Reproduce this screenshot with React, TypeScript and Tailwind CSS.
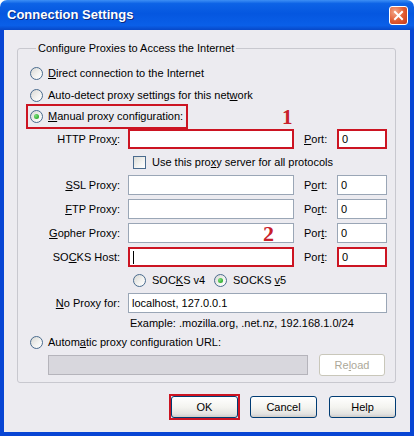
import React from 'react';

const Radio = ({ checked }: { checked?: boolean }) => (
  <span className="w-[13px] h-[13px] rounded-full border border-[#4a6b8e] bg-[linear-gradient(135deg,#d8d8d4_0%,#f4f4f2_60%,#ffffff_100%)] flex items-center justify-center shrink-0">
    {checked && <span className="w-[5px] h-[5px] rounded-full bg-[radial-gradient(circle_at_35%_35%,#7be07b,#169916)]" />}
  </span>
);

const Checkbox = () => (
  <span className="w-[13px] h-[13px] border border-[#4a6b8e] bg-[linear-gradient(135deg,#dcdcd7_0%,#f4f4f2_60%,#ffffff_100%)] shrink-0" />
);

const Field = ({ w, red, value, caret }: { w: string; red?: boolean; value?: string; caret?: boolean }) => (
  <div
    className={`${w} h-[20px] bg-white flex items-center px-[3px] text-[11px] ${
      red ? 'border-2 border-[#cc1422]' : 'border border-[#9aa6b6]'
    }`}
  >
    {caret && <span className="w-px h-[13px] bg-black" />}
    {value}
  </div>
);

const ProxyRow = ({
  label,
  port,
  red,
  redPort,
  caret,
}: {
  label: React.ReactNode;
  port: React.ReactNode;
  red?: boolean;
  redPort?: boolean;
  caret?: boolean;
}) => (
  <div className="flex items-center h-[24px]">
    <span className="w-[90px] text-right">{label}</span>
    <span className="w-[8px]" />
    <Field w="w-[166px]" red={red} caret={caret} />
    <span className="w-[43px] pl-[10px]">{port}</span>
    <Field w="w-[50px]" red={redPort} value="0" />
  </div>
);

const XpButton = ({ children, focus }: { children: React.ReactNode; focus?: boolean }) => (
  <button className="relative w-[67px] h-[22px] rounded-[3px] border border-[#003c74] bg-[linear-gradient(to_bottom,#ffffff_0%,#f4f4f0_50%,#e3e3e0_85%,#c9c9d2_100%)] text-[11px] text-black shadow-[inset_0_-1px_0_#d6d0c5]">
    {children}
    {focus && <span className="absolute -inset-[3px] border-2 border-[#cc1422]" />}
  </button>
);

export default function App() {
  return (
    <div className="w-[414px] h-[436px] flex flex-col font-['Liberation_Sans',Arial,sans-serif] text-[11px] text-black bg-white">
      <div className="h-[30px] shrink-0 rounded-t-[7px] bg-[linear-gradient(to_bottom,#3d8ff5_0%,#0d63e6_12%,#0557e0_45%,#0a5fe8_85%,#0748c8_100%)] flex items-center justify-between pl-[7px] pr-[6px]">
        <span className="text-white font-bold text-[13px] [text-shadow:1px_1px_0_#0a2a80]">Connection Settings</span>
        <span className="w-[19px] h-[19px] rounded-[3px] border border-white bg-[radial-gradient(circle_at_30%_30%,#f4a88a,#e0592f_55%,#c23a1c)] flex items-center justify-center">
          <svg width="11" height="11" viewBox="0 0 11 11">
            <path d="M2 2 L9 9 M9 2 L2 9" stroke="white" strokeWidth="2" strokeLinecap="square" />
          </svg>
        </span>
      </div>
      <div className="flex-1 flex flex-col bg-[#ecebf0] border-x-4 border-b-4 border-[#0845d4]">
        <fieldset className="relative ml-[13px] mr-[14px] mt-[11px] border border-[#c8c8cf] rounded-[3px] pl-[12px] pr-[8px] pb-[5px]">
          <legend className="ml-[6px] px-[2px] leading-[14px]">Configure Proxies to Access the Internet</legend>
          <div className="flex flex-col pt-[7px]">
            <div className="flex items-center h-[22px] gap-[5px]">
              <Radio />
              <span>
                <u>D</u>irect connection to the Internet
              </span>
            </div>
            <div className="flex items-center h-[22px] gap-[5px]">
              <Radio />
              <span>
                Auto-detect proxy settings for this net<u>w</u>ork
              </span>
            </div>
            <div className="flex items-center h-[21px]">
              <span className="flex items-center gap-[5px] outline-2 outline-solid outline-[#cc1422] outline-offset-[2px] pr-[1px]">
                <Radio checked />
                <span>
                  <u>M</u>anual proxy configuration:
                </span>
              </span>
            </div>
            <ProxyRow
              label={
                <>
                  HTTP Prox<u>y</u>:
                </>
              }
              port={
                <>
                  <u>P</u>ort:
                </>
              }
              red
              redPort
            />
            <div className="flex items-center h-[22px] pl-[103px] gap-[6px]">
              <Checkbox />
              <span>
                Use this pro<u>x</u>y server for all protocols
              </span>
            </div>
            <ProxyRow
              label={
                <>
                  <u>S</u>SL Proxy:
                </>
              }
              port={
                <>
                  P<u>o</u>rt:
                </>
              }
            />
            <ProxyRow
              label={
                <>
                  <u>F</u>TP Proxy:
                </>
              }
              port={
                <>
                  Po<u>r</u>t:
                </>
              }
            />
            <ProxyRow
              label={
                <>
                  <u>G</u>opher Proxy:
                </>
              }
              port={
                <>
                  Por<u>t</u>:
                </>
              }
            />
            <ProxyRow
              label={
                <>
                  SO<u>C</u>KS Host:
                </>
              }
              port={
                <>
                  Por<u>t</u>:
                </>
              }
              red
              redPort
              caret
            />
            <div className="flex items-center h-[23px] pl-[103px]">
              <span className="flex items-center gap-[6px] w-[81px]">
                <Radio />
                <span>
                  SOC<u>K</u>S v4
                </span>
              </span>
              <span className="flex items-center gap-[6px]">
                <Radio checked />
                <span>
                  SOCKS <u>v</u>5
                </span>
              </span>
            </div>
            <div className="flex items-center h-[22px]">
              <span className="w-[90px] text-right">
                <u>N</u>o Proxy for:
              </span>
              <span className="w-[8px]" />
              <Field w="w-[259px]" value="localhost, 127.0.0.1" />
            </div>
            <div className="flex items-center h-[18px] pl-[100px]">Example: .mozilla.org, .net.nz, 192.168.1.0/24</div>
            <div className="flex items-center h-[21px] gap-[5px]">
              <Radio />
              <span>
                Autom<u>a</u>tic proxy configuration URL:
              </span>
            </div>
            <div className="flex items-center h-[24px] pl-[18px]">
              <div className="w-[260px] h-[20px] bg-[#d8d7dd] border border-[#b5b4bb]" />
              <div className="ml-[11px] w-[66px] h-[22px] rounded-[3px] border border-[#c9c7ba] bg-white flex items-center justify-center text-[#aca899]">
                Re<u>l</u>oad
              </div>
            </div>
          </div>
          <span className="absolute left-[264px] top-[52px] font-['Liberation_Serif',serif] font-bold text-[21px] leading-none text-[#c8202a]">1</span>
          <span className="absolute left-[245px] top-[168px] font-['Liberation_Serif',serif] font-bold text-[22px] leading-none text-[#c8202a]">2</span>
        </fieldset>
        <div className="flex justify-end gap-[12px] mt-[13px] mr-[14px]">
          <XpButton focus>OK</XpButton>
          <XpButton>Cancel</XpButton>
          <XpButton>Help</XpButton>
        </div>
      </div>
    </div>
  );
}
